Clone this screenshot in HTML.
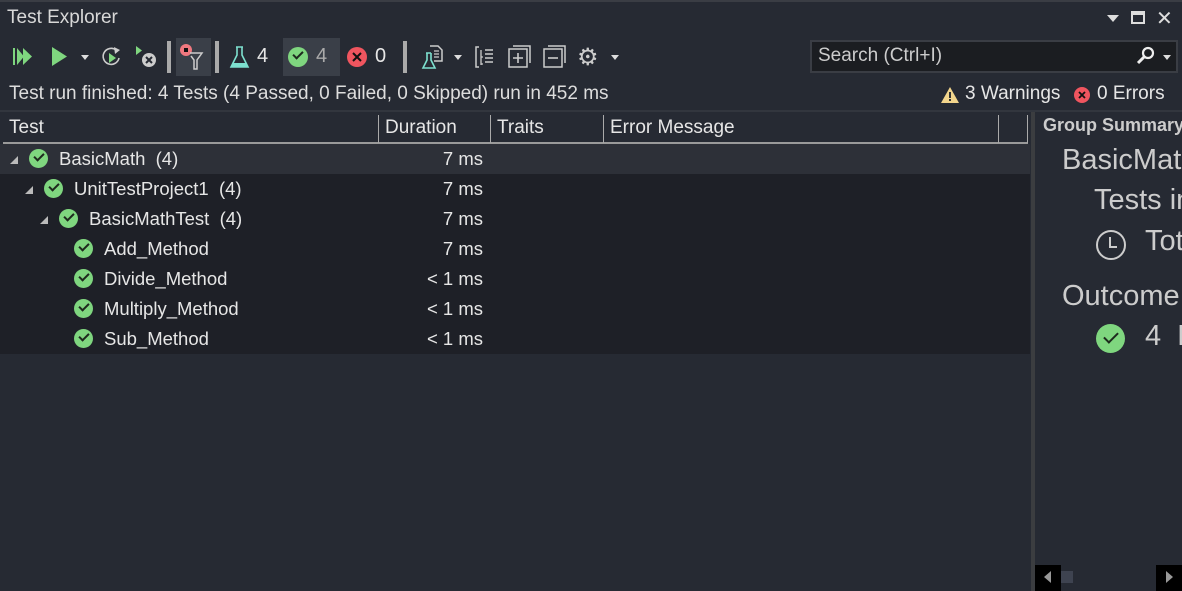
<!DOCTYPE html>
<html><head><meta charset="utf-8"><style>
*{margin:0;padding:0;box-sizing:border-box}
body{width:1182px;height:591px;overflow:hidden;background:#262a33;font-family:"Liberation Sans","Noto Sans CJK SC",sans-serif;color:#e6e6e6;position:relative;font-size:18.5px}
.a{position:absolute;white-space:nowrap}
.chk{position:absolute;width:19px;height:19px;border-radius:50%;background:#7fd67f}
.chk:after{content:"";position:absolute;left:5px;top:4px;width:8px;height:4px;border-left:2px solid #1e2a1e;border-bottom:2px solid #1e2a1e;transform:rotate(-45deg)}
.big:after{left:8px;top:8px;width:12px;height:6px;border-width:2.5px}
.tri{position:absolute;width:0;height:0;border-left:4px solid transparent;border-right:4px solid transparent;border-top:5px solid #ddd}
.exp{position:absolute;width:0;height:0;border-left:8px solid transparent;border-bottom:8px solid #bbb}
.sep{position:absolute;width:4px;height:32px;background:#aaa;top:41px}
.row{position:absolute;left:0;width:1030px;height:30px}
.row .n{position:absolute;top:4px}
.row .d{position:absolute;right:547px;top:4px}
</style></head><body>
<div style="position:absolute;left:0;top:0;width:1182px;height:2px;background:#3a3d44"></div>
<div class="a" style="left:7px;top:7px;font-size:19px;color:#d8d8d8">Test Explorer</div>
<div class="a" style="left:1107px;top:15px;width:0;height:0;border-left:6px solid transparent;border-right:6px solid transparent;border-top:7px solid #ddd"></div>
<div class="a" style="left:1131px;top:11px;width:14px;height:13px;border:2px solid #ddd;border-top-width:4px"></div>
<div class="a" style="left:1156px;top:6px;font-size:20px;color:#ddd">✕</div>
<svg class="a" style="left:10px;top:46px" width="24" height="22"><rect x="3" y="2" width="2" height="17" fill="#7fd67f"/><path d="M7 2 L7 19 L14 10.5Z M13 2 L13 19 L22 10.5Z" fill="#7fd67f"/></svg>
<svg class="a" style="left:50px;top:46px" width="20" height="22"><path d="M2 1 L2 20 L17 10.5Z" fill="#7fd67f"/></svg>
<div class="tri" style="left:81px;top:55px"></div>
<svg class="a" style="left:100px;top:45px" width="24" height="24"><path d="M16 5 A8 8 0 1 0 19 13" stroke="#ccc" stroke-width="1.6" fill="none"/><path d="M14 2 L20 5 L15 9Z" fill="#ccc"/><path d="M9 8 L9 18 L16 13Z" fill="#7fd67f"/></svg>
<svg class="a" style="left:134px;top:45px" width="26" height="26"><path d="M2 1 L2 10 L8 5.5Z" fill="#7fd67f"/><circle cx="15" cy="15" r="7" fill="#ccc"/><path d="M12 12 L18 18 M18 12 L12 18" stroke="#262a33" stroke-width="2"/></svg>
<div class="sep" style="left:167px"></div>
<div class="a" style="left:176px;top:38px;width:35px;height:38px;background:#3a3f48"></div>
<svg class="a" style="left:178px;top:42px" width="32" height="30"><circle cx="8" cy="8" r="6" fill="#f0787f"/><rect x="6" y="6" width="4" height="4" fill="#111"/><path d="M12 11 L24 11 L19 18 L19 27 L16 27 L16 18 L13 14" stroke="#ccc" stroke-width="1.5" fill="none"/></svg>
<div class="sep" style="left:215px"></div>
<svg class="a" style="left:228px;top:45px" width="24" height="26"><path d="M8 2 L15 2 M9 2 L9 10 L3 22 L20 22 L14 10 L14 2" stroke="#7de0cf" stroke-width="1.6" fill="none"/><path d="M5 18 L18 18 L20 22 L3 22Z" fill="#7de0cf"/></svg>
<div class="a" style="left:257px;top:45px;font-size:20px">4</div>
<div class="a" style="left:283px;top:38px;width:57px;height:38px;background:#3a3f48"></div>
<div class="chk" style="left:288px;top:47px;width:20px;height:20px"></div>
<div class="a" style="left:316px;top:45px;font-size:20px;color:#aaa">4</div>
<svg class="a" style="left:346px;top:46px" width="22" height="22"><circle cx="11" cy="11" r="10" fill="#f0555f"/><path d="M7 7 L15 15 M15 7 L7 15" stroke="#111" stroke-width="2"/></svg>
<div class="a" style="left:375px;top:45px;font-size:20px">0</div>
<div class="sep" style="left:403px"></div>
<svg class="a" style="left:421px;top:44px" width="24" height="28"><path d="M9 2 L17 2 L21 6 L21 17 L13 17" stroke="#ccc" stroke-width="1.5" fill="none"/><path d="M13 7 L18 7 M13 10 L18 10 M13 13 L18 13" stroke="#ccc" stroke-width="1.3"/><path d="M5 9 L10 9 M6 9 L6 16 L2 24 L14 24 L10 16 L10 9" stroke="#7de0cf" stroke-width="1.6" fill="none"/></svg>
<div class="tri" style="left:454px;top:55px"></div>
<svg class="a" style="left:474px;top:45px" width="22" height="24"><path d="M5 2 L2 2 L2 22 L5 22" stroke="#ccc" stroke-width="1.5" fill="none"/><path d="M7 5 L7 20 M7 12 L9 12 M7 19 L9 19" stroke="#ccc" stroke-width="1.3" fill="none"/><path d="M11 5 L19 5 M11 9 L19 9 M11 13 L19 13 M11 17 L19 17" stroke="#ccc" stroke-width="1.5"/></svg>
<svg class="a" style="left:507px;top:44px" width="26" height="26"><path d="M6 2 L23 2 L23 19" stroke="#ccc" stroke-width="1.5" fill="none"/><rect x="2" y="5" width="18" height="18" stroke="#ccc" stroke-width="1.5" fill="none"/><path d="M11 9 L11 19 M6 14 L16 14" stroke="#ccc" stroke-width="1.6"/></svg>
<svg class="a" style="left:542px;top:44px" width="26" height="26"><path d="M6 2 L23 2 L23 19" stroke="#ccc" stroke-width="1.5" fill="none"/><rect x="2" y="5" width="18" height="18" stroke="#ccc" stroke-width="1.5" fill="none"/><path d="M6 14 L16 14" stroke="#ccc" stroke-width="1.6"/></svg>
<div class="a" style="left:577px;top:43px;font-size:24px;color:#ccc">⚙</div>
<div class="tri" style="left:611px;top:55px"></div>
<div class="a" style="left:810px;top:40px;width:368px;height:33px;background:#1b1d21;border:2px solid #3a3d44"></div>
<div class="a" style="left:818px;top:45px;color:#ccc;font-size:19px">Search (Ctrl+I)</div>
<svg class="a" style="left:1135px;top:46px" width="22" height="20"><circle cx="13" cy="7" r="5" stroke="#eee" stroke-width="2.2" fill="none"/><path d="M9 11 L3 17" stroke="#eee" stroke-width="3"/></svg>
<div class="tri" style="left:1163px;top:55px"></div>
<div class="a" style="left:9px;top:83px;font-size:19px;color:#ddd">Test run finished: 4 Tests (4 Passed, 0 Failed, 0 Skipped) run in 452 ms</div>
<svg class="a" style="left:940px;top:86px" width="20" height="18"><path d="M10 1 L19 17 L1 17Z" fill="#f2d58c"/><rect x="9" y="6" width="2" height="6" fill="#333"/><rect x="9" y="13" width="2" height="2" fill="#333"/></svg>
<div class="a" style="left:965px;top:83px;font-size:19px">3 Warnings</div>
<svg class="a" style="left:1073px;top:86px" width="18" height="18"><circle cx="9" cy="9" r="8" fill="#f0555f"/><path d="M6 6 L12 12 M12 6 L6 12" stroke="#111" stroke-width="1.8"/></svg>
<div class="a" style="left:1097px;top:83px;font-size:19px">0 Errors</div>
<div class="a" style="left:0;top:110px;width:1182px;height:2px;background:#32363e"></div>
<div class="a" style="left:3px;top:115px;width:1025px;height:29px;background:#262a33;border-bottom:2px solid #9a9a9a"></div>
<div class="a" style="left:378px;top:115px;width:1px;height:28px;background:#aaa"></div>
<div class="a" style="left:490px;top:115px;width:1px;height:28px;background:#aaa"></div>
<div class="a" style="left:603px;top:115px;width:1px;height:28px;background:#aaa"></div>
<div class="a" style="left:998px;top:115px;width:1px;height:28px;background:#aaa"></div>
<div class="a" style="left:1027px;top:115px;width:1px;height:28px;background:#aaa"></div>
<div class="a" style="left:9px;top:117px;font-size:19px">Test</div>
<div class="a" style="left:385px;top:117px;font-size:19px">Duration</div>
<div class="a" style="left:497px;top:117px;font-size:19px">Traits</div>
<div class="a" style="left:610px;top:117px;font-size:19px">Error Message</div>
<div class="a" style="left:0;top:174px;width:1030px;height:180px;background:#1e2027"></div>
<div class="row" style="top:144px;background:#2d3038"><div class="exp" style="left:10px;top:12px"></div><div class="chk" style="left:29px;top:5px"></div><div class="n" style="left:59px">BasicMath&nbsp; (4)</div><div class="d">7 ms</div></div>
<div class="row" style="top:174px"><div class="exp" style="left:25px;top:12px"></div><div class="chk" style="left:44px;top:5px"></div><div class="n" style="left:74px">UnitTestProject1&nbsp; (4)</div><div class="d">7 ms</div></div>
<div class="row" style="top:204px"><div class="exp" style="left:40px;top:12px"></div><div class="chk" style="left:59px;top:5px"></div><div class="n" style="left:89px">BasicMathTest&nbsp; (4)</div><div class="d">7 ms</div></div>
<div class="row" style="top:234px"><div class="chk" style="left:74px;top:5px"></div><div class="n" style="left:104px">Add_Method</div><div class="d">7 ms</div></div>
<div class="row" style="top:264px"><div class="chk" style="left:74px;top:5px"></div><div class="n" style="left:104px">Divide_Method</div><div class="d">&lt; 1 ms</div></div>
<div class="row" style="top:294px"><div class="chk" style="left:74px;top:5px"></div><div class="n" style="left:104px">Multiply_Method</div><div class="d">&lt; 1 ms</div></div>
<div class="row" style="top:324px"><div class="chk" style="left:74px;top:5px"></div><div class="n" style="left:104px">Sub_Method</div><div class="d">&lt; 1 ms</div></div>
<div class="a" style="left:1031px;top:112px;width:4px;height:479px;background:#3b3d40"></div>
<div class="a" style="left:1043px;top:115px;font-size:18px;font-weight:bold;color:#ccc">Group Summary</div>
<div class="a" style="left:1062px;top:144px;font-size:29px;color:#ccc">BasicMath</div>
<div class="a" style="left:1094px;top:184px;font-size:29px;color:#ccc">Tests in</div>
<svg class="a" style="left:1095px;top:229px" width="32" height="32"><circle cx="16" cy="16" r="14" stroke="#ccc" stroke-width="2" fill="none"/><path d="M15 8 L15 18 L22 18" stroke="#ccc" stroke-width="2" fill="none"/></svg>
<div class="a" style="left:1145px;top:225px;font-size:29px;color:#ccc">Total</div>
<div class="a" style="left:1062px;top:280px;font-size:29px;color:#ccc">Outcome</div>
<div class="chk big" style="left:1096px;top:324px;width:29px;height:29px"></div>
<div class="a" style="left:1145px;top:320px;font-size:29px;color:#ccc">4&nbsp; P</div>
<div class="a" style="left:1035px;top:565px;width:26px;height:26px;background:#000"></div>
<div class="a" style="left:1044px;top:571px;width:0;height:0;border-top:6px solid transparent;border-bottom:6px solid transparent;border-right:7px solid #999"></div>
<div class="a" style="left:1061px;top:571px;width:12px;height:12px;background:#3e4350"></div>
<div class="a" style="left:1156px;top:565px;width:26px;height:26px;background:#000"></div>
<div class="a" style="left:1166px;top:571px;width:0;height:0;border-top:6px solid transparent;border-bottom:6px solid transparent;border-left:7px solid #999"></div>
</body></html>
